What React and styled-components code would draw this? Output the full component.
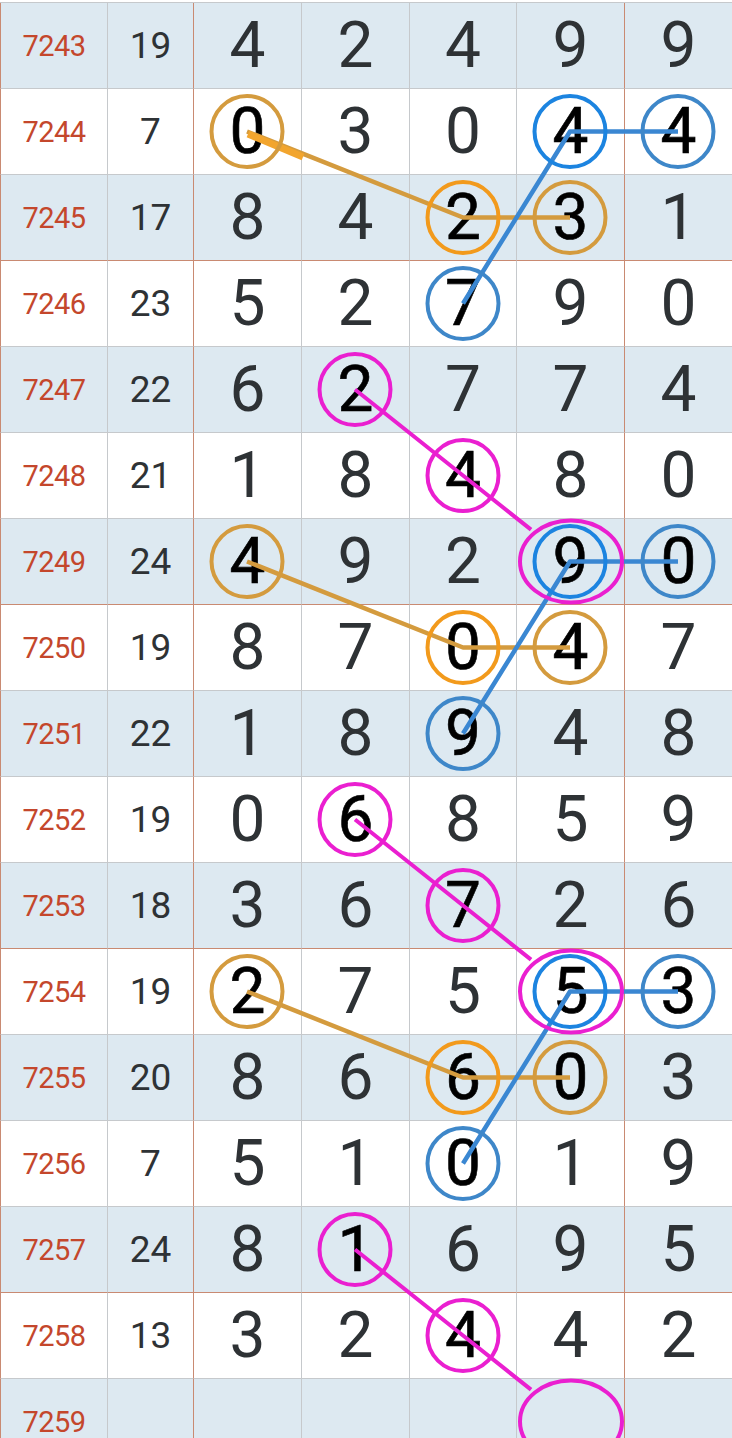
import styled, { createGlobalStyle } from 'styled-components';

const Global = createGlobalStyle`
  html, body { margin: 0; padding: 0; background: #fff; overflow: hidden; }
  body { width: 732px; height: 1438px; font-family: Roboto, "Noto Sans", sans-serif; }
`;

const GREY = '#c6c9cc';
const BROWN = '#c98a72';
const SHADE = '#dde9f1';

const rows = [
  ['7243', '19', '42499'],
  ['7244', '7', '03044'],
  ['7245', '17', '84231'],
  ['7246', '23', '52790'],
  ['7247', '22', '62774'],
  ['7248', '21', '18480'],
  ['7249', '24', '49290'],
  ['7250', '19', '87047'],
  ['7251', '22', '18948'],
  ['7252', '19', '06859'],
  ['7253', '18', '36726'],
  ['7254', '19', '27553'],
  ['7255', '20', '86603'],
  ['7256', '7', '51019'],
  ['7257', '24', '81695'],
  ['7258', '13', '32442'],
  ['7259', '', '     '],
];

const colX = [247, 355, 463, 570, 678];
const rowY = (r) => 45.5 + 86 * r;

const GOLD = '#d49b3e';
const ORANGE = '#f29a1c';
const BLUE = '#1c84e0';
const STEEL = '#3e87c9';
const PINK = '#ea1fd0';

// [col, row, colour]
const circles = [
  [0, 1, GOLD], [2, 2, ORANGE], [3, 2, GOLD],
  [3, 1, BLUE], [4, 1, STEEL], [2, 3, STEEL],
  [1, 4, PINK], [2, 5, PINK],
  [0, 6, GOLD], [2, 7, ORANGE], [3, 7, GOLD],
  [3, 6, BLUE], [4, 6, STEEL], [2, 8, STEEL],
  [1, 9, PINK], [2, 10, PINK],
  [0, 11, GOLD], [2, 12, ORANGE], [3, 12, GOLD],
  [3, 11, BLUE], [4, 11, STEEL], [2, 13, STEEL],
  [1, 14, PINK], [2, 15, PINK],
];

const ovals = [[3, 6], [3, 11], [3, 16]];

const goldPaths = [
  [[0, 1], [2, 2], [3, 2]],
  [[0, 6], [2, 7], [3, 7]],
  [[0, 11], [2, 12], [3, 12]],
];
const bluePaths = [
  [[4, 1], [3, 1], [2, 3]],
  [[4, 6], [3, 6], [2, 8]],
  [[4, 11], [3, 11], [2, 13]],
];
const pinkStarts = [4, 9, 14];

const marked = new Set(circles.map(([c, r]) => `${c}-${r}`));

const Page = styled.div`
  position: relative;
  width: 732px;
  height: 1438px;
  overflow: hidden;
`;

const Sheet = styled.div`
  margin-top: 2px;
  display: grid;
  grid-template-columns: 108px 86px 108px 108px 107px 108px 108px;
  grid-auto-rows: 86px;
  border-top: 1px solid ${GREY};
  width: 733px;
`;

const Cell = styled.div`
  box-sizing: border-box;
  display: flex;
  align-items: center;
  justify-content: center;
  background: ${(p) => (p.$shade ? SHADE : '#fff')};
  border-right: 1px solid ${(p) => (p.$brownRight ? BROWN : GREY)};
  border-bottom: 1px solid ${(p) => (p.$brownBottom ? BROWN : GREY)};
  border-left: ${(p) => (p.$first ? `1px solid ${BROWN}` : 'none')};
`;

const Issue = styled.span`
  font-size: 29px;
  color: #c4472c;
  letter-spacing: -0.5px;
`;

const Sum = styled.span`
  font-size: 37px;
  color: #2e3235;
`;

const Digit = styled.span`
  font-size: 64px;
  line-height: 1;
  color: ${(p) => (p.$marked ? '#000' : '#2e3235')};
  -webkit-text-stroke: ${(p) => (p.$marked ? '0.6px #000' : '0')};
`;

const Overlay = styled.svg`
  position: absolute;
  top: 0;
  left: 0;
  pointer-events: none;
`;

function pts(path) {
  return path.map(([c, r]) => `${colX[c]},${rowY(r)}`).join(' ');
}

function pinkLine(r) {
  // from first circle through second, stopping at the oval's edge
  const x1 = colX[1], y1 = rowY(r);
  const x2 = colX[2], y2 = rowY(r + 1);
  const dx = x2 - x1, dy = y2 - y1;
  const x3 = x2 + dx * 0.63, y3 = y2 + dy * 0.63;
  return `${x1},${y1} ${x2},${y2} ${x3},${y3}`;
}

export default function App() {
  return (
    <Page>
      <Global />
      <Sheet>
        {rows.map(([issue, sum, digits], r) => {
          const shade = r % 2 === 0;
          const brownBottom = (r + 2) % 4 === 0;
          return [
            <Cell key={`${r}-i`} $first $shade={shade} $brownBottom={brownBottom}>
              <Issue>{issue}</Issue>
            </Cell>,
            <Cell key={`${r}-s`} $brownRight $shade={shade} $brownBottom={brownBottom}>
              <Sum>{sum}</Sum>
            </Cell>,
            ...digits.split('').map((d, c) => (
              <Cell
                key={`${r}-${c}`}
                $shade={shade}
                $brownBottom={brownBottom}
                $brownRight={c === 3}
              >
                <Digit $marked={marked.has(`${c}-${r}`)}>{d.trim()}</Digit>
              </Cell>
            )),
          ];
        })}
      </Sheet>
      <Overlay width="732" height="1438" viewBox="0 0 732 1438">
        {goldPaths.map((p, i) => (
          <polyline key={`g${i}`} points={pts(p)} fill="none" stroke={GOLD} strokeWidth="4.5" strokeLinejoin="round" />
        ))}
        <line x1="248" y1="134" x2="303" y2="157" stroke="#f2a52e" strokeWidth="7" />
        {pinkStarts.map((r) => (
          <polyline key={`p${r}`} points={pinkLine(r)} fill="none" stroke={PINK} strokeWidth="4" strokeLinejoin="round" />
        ))}
        {bluePaths.map((p, i) => (
          <polyline key={`b${i}`} points={pts(p)} fill="none" stroke="#3a87d2" strokeWidth="4.5" strokeLinejoin="round" />
        ))}
        {circles.map(([c, r, color]) => (
          <circle key={`c${c}-${r}`} cx={colX[c]} cy={rowY(r)} r="35.5" fill="none" stroke={color} strokeWidth="4" />
        ))}
        {ovals.map(([c, r]) => (
          <ellipse key={`o${r}`} cx={colX[c] + 1} cy={rowY(r)} rx="51" ry="41" fill="none" stroke={PINK} strokeWidth="4" />
        ))}
      </Overlay>
    </Page>
  );
}
